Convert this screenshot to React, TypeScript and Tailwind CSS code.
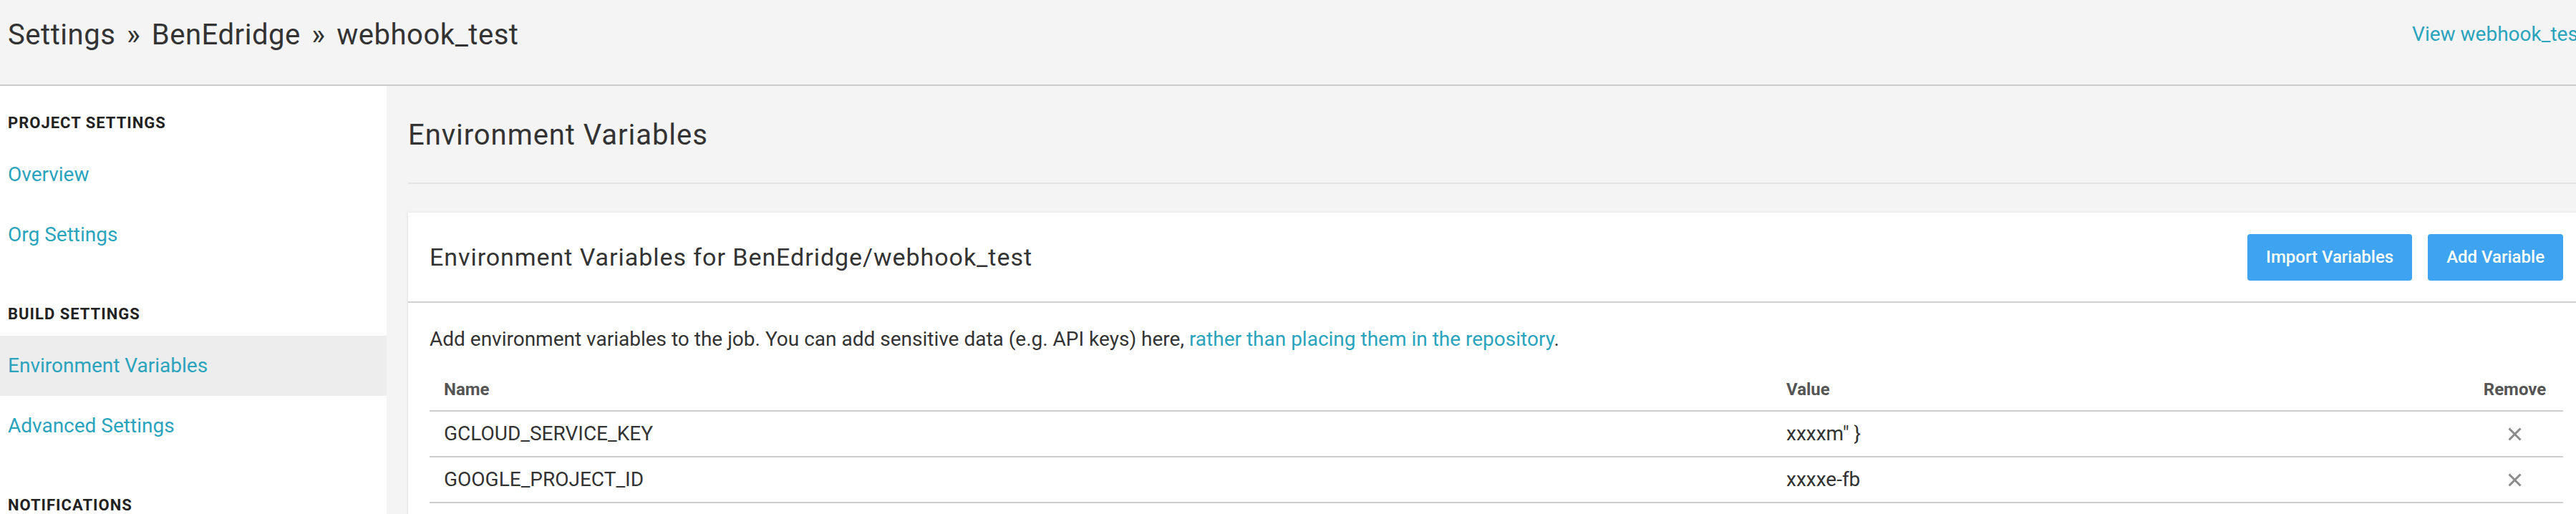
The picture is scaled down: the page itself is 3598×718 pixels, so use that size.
import React from "react";

type EnvVar = { name: string; value: string };

const vars: EnvVar[] = [
  { name: "GCLOUD_SERVICE_KEY", value: "xxxxm\" }" },
  { name: "GOOGLE_PROJECT_ID", value: "xxxxe-fb" },
];

const sections = [
  { title: "PROJECT SETTINGS", items: ["Overview", "Org Settings"] },
  { title: "BUILD SETTINGS", items: ["Environment Variables", "Advanced Settings"] },
  { title: "NOTIFICATIONS", items: ["Chat Notifications", "Status Badges"] },
];

const CloseIcon = () => (
  <svg width="19" height="19" viewBox="0 0 19 19" fill="none">
    <path d="M1.5 1.5 L17.5 17.5 M17.5 1.5 L1.5 17.5" stroke="#8a8a8a" strokeWidth="3" />
  </svg>
);

const Sidebar = () => (
  <aside className="flex w-[540px] shrink-0 flex-col gap-[39px] bg-white pt-[22px]">
    {sections.map((s) => (
      <div key={s.title}>
        <div className="flex h-[60px] items-center pl-[11px] text-[22px] leading-[26px] font-bold tracking-[1px] text-[#222]">
          {s.title}
        </div>
        {s.items.map((item) => (
          <a
            key={item}
            href="#"
            className={`flex h-[84px] items-center pl-[11px] text-[28px] text-[#2aa3bd] ${
              item === "Environment Variables" ? "bg-[#ededed]" : ""
            }`}
          >
            {item}
          </a>
        ))}
      </div>
    ))}
  </aside>
);

export default function App() {
  return (
    <div className="h-[718px] w-[3598px] overflow-hidden font-['Roboto',sans-serif]">
      <div className="w-[3640px]">
        {/* Header */}
        <header className="flex h-[120px] items-start justify-between border-b-2 border-[#cccccc] bg-[#f4f4f4] pl-[11px] pr-[30px]">
          <div className="pt-[25px] text-[40px] leading-[48px] tracking-[0.55px] text-[#333]">
            Settings <span className="px-[5px]">»</span> BenEdridge <span className="px-[5px]">»</span> webhook_test
          </div>
          <a href="#" className="pt-[31px] text-[28px] leading-[34px] text-[#2aa3bd]">
            View webhook_test
          </a>
        </header>

        <div className="flex">
          <Sidebar />

          <main className="min-h-[600px] flex-1 bg-[#f4f4f4] px-[30px] pt-[45px]">
            <h1 className="border-b-2 border-[#e4e4e4] pb-[42px] text-[40px] leading-[48px] font-normal tracking-[0.95px] text-[#333]">
              Environment Variables
            </h1>

            <div className="mt-[40px] bg-white shadow-[0_1px_4px_rgba(0,0,0,0.12)]">
              {/* Card header */}
              <div className="flex h-[126px] items-center justify-between border-b-2 border-[#d0d0d0] px-[30px]">
                <h2 className="text-[34px] tracking-[0.95px] text-[#333]">
                  Environment Variables for BenEdridge/webhook_test
                </h2>
                <div className="flex gap-[22px]">
                  <button className="h-[65px] rounded-[4px] bg-[#3ea3f0] px-[26px] text-[24px] font-medium text-white">
                    Import Variables
                  </button>
                  <button className="h-[65px] rounded-[4px] bg-[#3ea3f0] px-[26px] text-[24px] font-medium text-white">
                    Add Variable
                  </button>
                </div>
              </div>

              {/* Card body */}
              <div className="px-[30px] pt-[31px] pb-[40px]">
                <p className="text-[28px] leading-[40px] text-[#333]">
                  Add environment variables to the job. You can add sensitive data (e.g. API keys) here,{" "}
                  <a href="#" className="text-[#2aa3bd]">
                    rather than placing them in the repository
                  </a>
                  .
                </p>

                <div className="mt-[36px]">
                  <div className="flex border-b-2 border-[#cfcfcf] pb-[15px] text-[24px] leading-[28px] font-bold text-[#555]">
                    <div className="w-[1875px] pl-[20px]">Name</div>
                    <div className="flex-1 pl-[20px]">Value</div>
                    <div className="w-[135px] text-center">Remove</div>
                  </div>
                  {vars.map((v) => (
                    <div
                      key={v.name}
                      className="flex h-[64px] items-center border-b-2 border-[#cfcfcf] text-[28px] text-[#333]"
                    >
                      <div className="w-[1875px] pl-[20px]">{v.name}</div>
                      <div className="flex-1 pl-[20px]">{v.value}</div>
                      <div className="flex w-[135px] justify-center">
                        <CloseIcon />
                      </div>
                    </div>
                  ))}
                </div>
              </div>
            </div>
          </main>
        </div>
      </div>
    </div>
  );
}
